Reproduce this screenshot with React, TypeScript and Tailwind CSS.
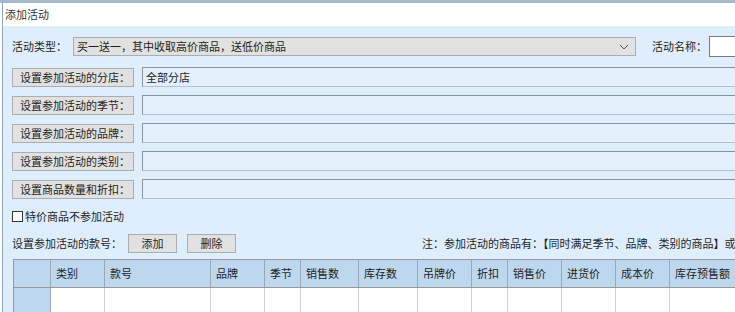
import React from 'react';

// Column widths of the goods table, left to right (first one is the row header)
const columns = [
  { title: '', width: 37 },
  { title: '类别', width: 54 },
  { title: '款号', width: 106 },
  { title: '品牌', width: 54 },
  { title: '季节', width: 36 },
  { title: '销售数', width: 58 },
  { title: '库存数', width: 59 },
  { title: '吊牌价', width: 54 },
  { title: '折扣', width: 36 },
  { title: '销售价', width: 54 },
  { title: '进货价', width: 54 },
  { title: '成本价', width: 54 },
  { title: '库存预售额', width: 90 },
];

const settingRows = [
  { label: '设置参加活动的分店：', value: '全部分店' },
  { label: '设置参加活动的季节：', value: '' },
  { label: '设置参加活动的品牌：', value: '' },
  { label: '设置参加活动的类别：', value: '' },
  { label: '设置商品数量和折扣：', value: '' },
];

const ChevronDown = () => (
  <svg width="10" height="6" viewBox="0 0 10 6" fill="none" stroke="#555" strokeWidth="1">
    <path d="M1 1l4 4 4-4" />
  </svg>
);

const AddActivityPage = () => {
  return (
    <div className="h-[312px] w-[735px] overflow-hidden bg-white text-[11px] leading-none text-[#1e1e1e] font-['Noto_Sans_CJK_SC','Noto_Sans',sans-serif]">
      {/* top strip */}
      <div className="h-[3px] bg-[#a7bacb]" />

      <div className="ml-[2px] h-[309px] border-l border-[#8ea3b8]">
        {/* Title */}
        <div className="flex h-[23px] items-center bg-white pl-[2px] text-[#333]">添加活动</div>

        {/* Body */}
        <div className="h-[286px] bg-[#dfeefc] pl-[9px] pt-[11px]">
          {/* activity type row */}
          <div className="flex h-[19px] items-center">
            <span className="w-[61px] shrink-0 whitespace-nowrap">活动类型：</span>
            <div className="flex h-[19px] w-[563px] shrink-0 items-center justify-between border border-[#adadad] bg-[#e1e1e1] pl-[3px] pr-[6px]">
              <span className="whitespace-nowrap">买一送一，其中收取高价商品，送低价商品</span>
              <ChevronDown />
            </div>
            <span className="ml-[16px] w-[57px] shrink-0 whitespace-nowrap">活动名称：</span>
            <div className="h-[21px] w-[60px] shrink-0 border border-[#7a7a7a] bg-white" />
          </div>

          {/* setting rows */}
          <div className="mt-[11px] flex flex-col gap-[8px]">
            {settingRows.map((row) => (
              <div key={row.label} className="flex h-[20px] items-center">
                <button className="flex h-[19px] w-[122px] shrink-0 items-center border border-[#adadad] bg-[#e1e1e1] pl-[7px] text-left whitespace-nowrap">
                  {row.label}
                </button>
                <div className="ml-[8px] flex h-[20px] w-[620px] shrink-0 items-center border-y border-l border-[#8c959e] border-b-[#b8c2cc] bg-[#e3f0fc] pl-[3px] whitespace-nowrap">
                  {row.value}
                </div>
              </div>
            ))}
          </div>

          {/* special price checkbox */}
          <div className="mt-[12px] flex h-[11px] items-center gap-[2px]">
            <span className="h-[11px] w-[11px] border border-[#333] bg-white" />
            <span className="whitespace-nowrap">特价商品不参加活动</span>
          </div>

          {/* style numbers row */}
          <div className="mt-[12px] flex h-[19px] items-center">
            <span className="w-[116px] shrink-0 whitespace-nowrap">设置参加活动的款号：</span>
            <button className="h-[19px] w-[49px] shrink-0 border border-[#adadad] bg-[#e1e1e1]">添加</button>
            <button className="ml-[10px] h-[19px] w-[49px] shrink-0 border border-[#adadad] bg-[#e1e1e1]">删除</button>
            <span className="ml-[186px] shrink-0 whitespace-nowrap">注：参加活动的商品有：【同时满足季节、品牌、类别的商品】或</span>
          </div>

          {/* table */}
          <div className="ml-[1px] mt-[6px] w-[760px] border-l border-t border-[#9a9a9a] bg-white">
            <div className="flex h-[28px] border-b border-[#9a9a9a] bg-[#bdd7ee]">
              {columns.map((col, i) => (
                <div
                  key={i}
                  className="flex shrink-0 items-center border-r border-[#9aa8b5] pl-[5px] whitespace-nowrap"
                  style={{ width: col.width }}
                >
                  {col.title}
                </div>
              ))}
            </div>
            <div className="flex h-[30px]">
              {columns.map((col, i) => (
                <div
                  key={i}
                  className={i === 0 ? 'shrink-0 border-r border-[#9aa8b5] bg-[#bdd7ee]' : 'shrink-0 border-r border-[#d2d2d2] bg-white'}
                  style={{ width: col.width }}
                />
              ))}
            </div>
          </div>
        </div>
      </div>
    </div>
  );
};

export default AddActivityPage;
